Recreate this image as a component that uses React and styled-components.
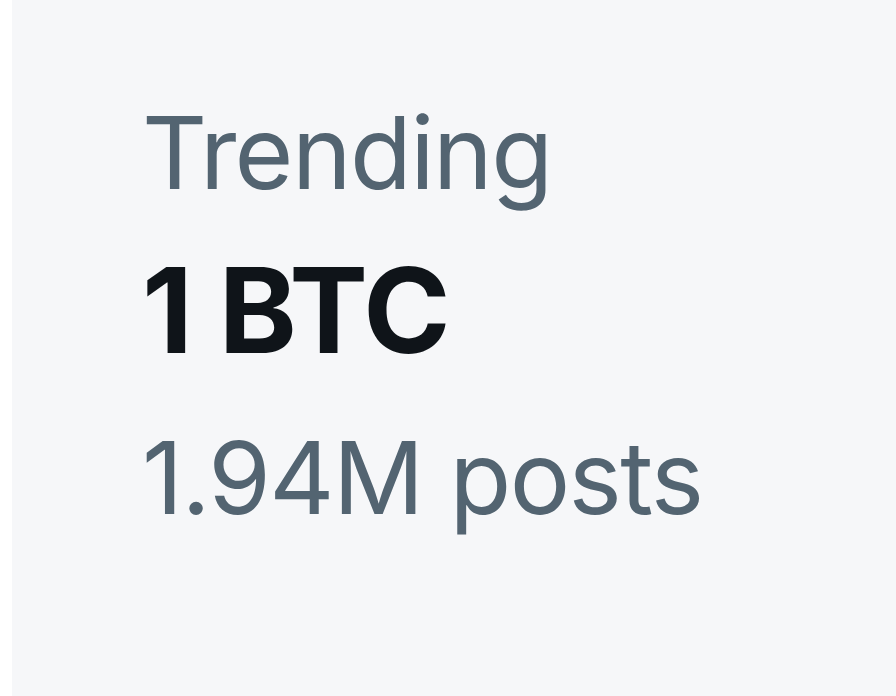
import React from 'react';
import styled, { createGlobalStyle } from 'styled-components';

const GlobalStyle = createGlobalStyle`
  html, body {
    margin: 0;
    padding: 0;
    background: #ffffff;
  }
`;

const Page = styled.div`
  display: flex;
  width: 896px;
  height: 696px;
  background: #ffffff;
  overflow: hidden;
`;

// gray trend card, a thin white strip stays visible at the left
const TrendCard = styled.div`
  flex: 1;
  margin-left: 12px;
  background: #f6f7f9;
  padding: 76px 0 0 130px;
  display: flex;
  flex-direction: column;
  font-family: Inter, "Liberation Sans", Arial, sans-serif;
`;

const Meta = styled.div`
  line-height: 153px;
  height: 153px;
  white-space: nowrap;
  font-size: 101px;
  font-weight: 400;
  color: #536471;
  letter-spacing: -1.6px;
`;

const Topic = styled.div`
  line-height: 162px;
  height: 162px;
  margin-bottom: 10px;
  white-space: nowrap;
  font-size: 118px;
  font-weight: 700;
  color: #0f1419;
  letter-spacing: -1px;
`;

const App = () => {
  return (
    <>
      <GlobalStyle />
      <Page>
        <TrendCard>
          <Meta>Trending</Meta>
          <Topic>1 BTC</Topic>
          <Meta>1.94M posts</Meta>
        </TrendCard>
      </Page>
    </>
  );
};

export default App;
